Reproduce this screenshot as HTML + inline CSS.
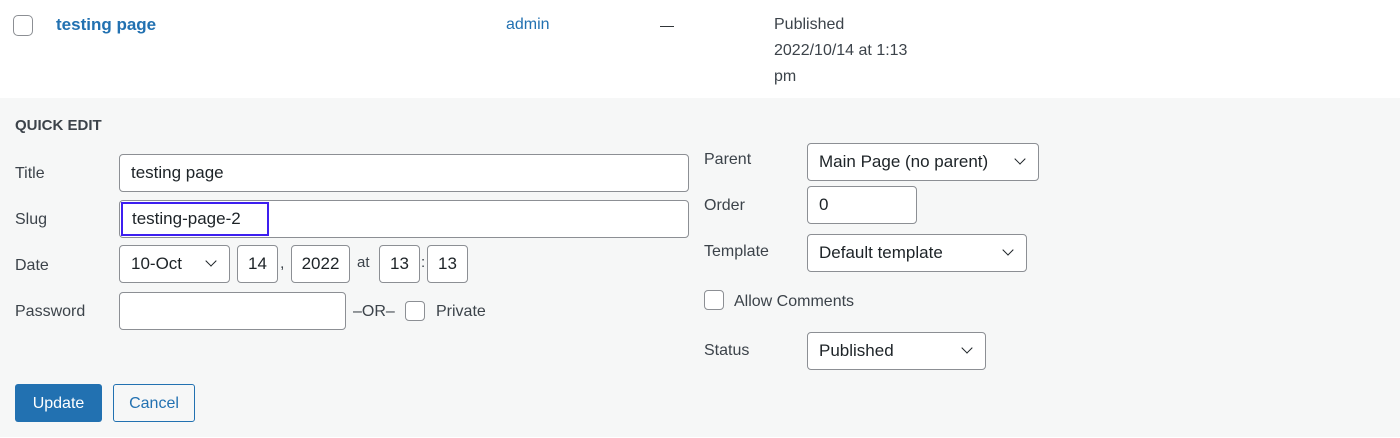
<!DOCTYPE html>
<html><head><style>
*{box-sizing:border-box;margin:0;padding:0}
body{width:1400px;height:438px;background:#fff;font-family:"Liberation Sans",sans-serif;color:#3c434a;position:relative;overflow:hidden}
.a{position:absolute;white-space:nowrap}
.gray{position:absolute;left:0;top:98px;width:1400px;height:339px;background:#f6f7f7}
.box{position:absolute;background:#fff;border:1px solid #8c8f94;border-radius:4px;font-size:17px;color:#1d2327;padding-left:11px;display:flex;align-items:center}
.lbl{position:absolute;font-size:16px;color:#3c434a;line-height:20px}
.cb{position:absolute;width:20px;height:20px;border:1px solid #8c8f94;border-radius:4px;background:#fff}
.chev{position:absolute;width:8px;height:8px;border-right:1.6px solid #1d2327;border-bottom:1.6px solid #1d2327;transform:rotate(45deg)}
.c{justify-content:center;padding:0}
</style></head><body>
<div class="cb" style="left:13px;top:15px;border-radius:5px;height:21px"></div>
<div class="a" style="left:56px;top:14px;font-size:17px;font-weight:bold;color:#2271b1;line-height:22px">testing page</div>
<div class="a" style="left:506px;top:15px;font-size:16px;color:#2271b1;line-height:20px">admin</div>
<div class="a" style="left:660px;top:15px;font-size:14px;color:#1d2327;line-height:20px">—</div>
<div class="a" style="left:774px;top:12px;font-size:16px;line-height:26px;color:#3c434a">Published<br>2022/10/14 at 1:13<br>pm</div>
<div class="gray"></div>
<div class="a" style="left:15px;top:117px;font-size:15px;font-weight:bold;line-height:18px">QUICK EDIT</div>

<div class="lbl" style="left:15px;top:164px">Title</div>
<div class="box" style="left:119px;top:154px;width:570px;height:38px">testing page</div>
<div class="lbl" style="left:15px;top:210px">Slug</div>
<div class="box" style="left:119px;top:200px;width:570px;height:38px;padding-left:0"><span style="display:inline-block;margin-left:1px;border:2px solid #3d1ff0;height:34px;padding:0 9px;line-height:30px;width:148px">testing-page-2</span></div>

<div class="lbl" style="left:15px;top:256px">Date</div>
<div class="box" style="left:119px;top:245px;width:111px;height:38px">10-Oct<span class="chev" style="left:87px;top:11px"></span></div>
<div class="box c" style="left:237px;top:245px;width:41px;height:38px">14</div>
<div class="a" style="left:280px;top:255px;font-size:16px">,</div>
<div class="box c" style="left:291px;top:245px;width:59px;height:38px">2022</div>
<div class="a" style="left:357px;top:254px;font-size:15px">at</div>
<div class="box c" style="left:379px;top:245px;width:41px;height:38px">13</div>
<div class="a" style="left:421px;top:254px;font-size:15px">:</div>
<div class="box c" style="left:427px;top:245px;width:41px;height:38px">13</div>

<div class="lbl" style="left:15px;top:302px">Password</div>
<div class="box" style="left:119px;top:292px;width:227px;height:38px"></div>
<div class="lbl" style="left:353px;top:302px">–OR–</div>
<div class="cb" style="left:405px;top:301px"></div>
<div class="lbl" style="left:436px;top:302px">Private</div>

<div class="a" style="left:15px;top:384px;width:87px;height:38px;background:#2271b1;border-radius:3px;color:#fff;font-size:16px;display:flex;align-items:center;justify-content:center;padding-top:2px">Update</div>
<div class="a" style="left:113px;top:384px;width:82px;height:38px;background:#f6f7f7;border:1px solid #2271b1;border-radius:3px;color:#2271b1;font-size:16px;display:flex;align-items:center;justify-content:center;padding-top:2px">Cancel</div>

<div class="lbl" style="left:704px;top:150px">Parent</div>
<div class="box" style="left:807px;top:143px;width:232px;height:38px">Main Page (no parent)<span class="chev" style="left:208px;top:11px"></span></div>
<div class="lbl" style="left:704px;top:196px">Order</div>
<div class="box" style="left:807px;top:186px;width:110px;height:38px">0</div>
<div class="lbl" style="left:704px;top:242px">Template</div>
<div class="box" style="left:807px;top:234px;width:220px;height:38px">Default template<span class="chev" style="left:196px;top:11px"></span></div>
<div class="cb" style="left:704px;top:290px"></div>
<div class="lbl" style="left:734px;top:292px">Allow Comments</div>
<div class="lbl" style="left:704px;top:341px">Status</div>
<div class="box" style="left:807px;top:332px;width:179px;height:38px">Published<span class="chev" style="left:155px;top:11px"></span></div>
</body></html>
